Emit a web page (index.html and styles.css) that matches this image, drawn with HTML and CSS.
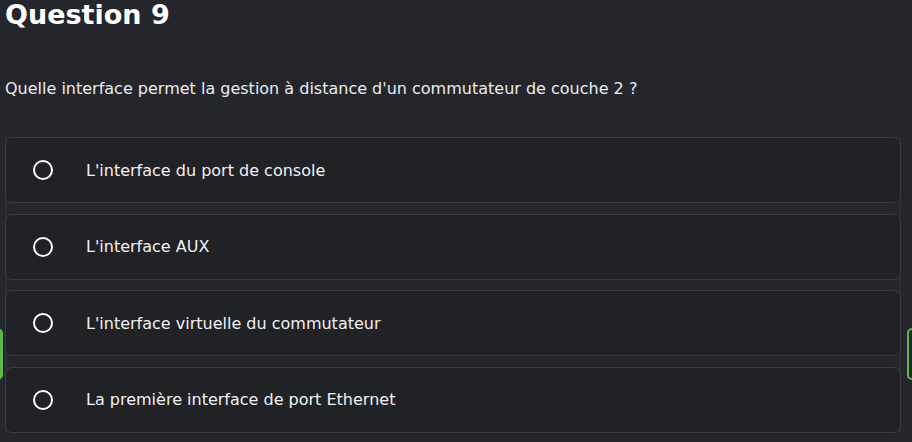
FILE: index.html
```html
<!DOCTYPE html>
<html lang="fr">
<head>
<meta charset="utf-8">
<title>Question 9</title>
<link rel="stylesheet" href="styles.css">
</head>
<body>
<main class="page">
  <h1 class="title">Question 9</h1>
  <p class="question">Quelle interface permet la gestion à distance d'un commutateur de couche 2 ?</p>
  <div class="options">
    <label class="option"><span class="radio"></span><span class="label">L'interface du port de console</span></label>
    <label class="option"><span class="radio"></span><span class="label">L'interface AUX</span></label>
    <label class="option"><span class="radio"></span><span class="label">L'interface virtuelle du commutateur</span></label>
    <label class="option"><span class="radio"></span><span class="label">La première interface de port Ethernet</span></label>
  </div>
</main>
<button class="nav nav-prev" aria-label="Précédent"></button>
<button class="nav nav-next" aria-label="Suivant"></button>
</body>
</html>
```

FILE: styles.css
```css
html, body {
  margin: 0;
  padding: 0;
  background: #25262b;
  color: #f1f1f3;
  font-family: "DejaVu Sans", "Liberation Sans", sans-serif;
  overflow: hidden;
}

.page {
  padding: 1px 11px 0 5px;
}

.title {
  margin: 0;
  font-size: 27px;
  line-height: 27px;
  font-weight: bold;
  color: #ffffff;
}

.question {
  margin: 50px 0 0 0;
  font-size: 16px;
  line-height: 22px;
  color: #ececef;
}

.options {
  margin-top: 37px;
  display: flex;
  flex-direction: column;
  gap: 10.67px;
  box-shadow: inset 2px 0 0 #2d2e33, inset -2px 0 0 #2d2e33;
}

.option {
  display: flex;
  align-items: center;
  height: 64px;
  border: 1px solid #3a3b40;
  border-radius: 7px;
  background: #212226;
  box-sizing: content-box;
}

.radio {
  width: 16px;
  height: 16px;
  border: 2px solid #ffffff;
  border-radius: 50%;
  margin-left: 27px;
  flex: none;
}

.label {
  margin-left: 33px;
  font-size: 16px;
  color: #f1f1f3;
}

.nav {
  position: fixed;
  top: 328px;
  height: 52px;
  width: 60px;
  border-radius: 5px;
  padding: 0;
}

.nav-prev {
  left: -57px;
  background: #5cb84a;
  border: 1px solid #5cb84a;
}

.nav-next {
  left: 907px;
  background: transparent;
  border: 2px solid #5cb84a;
}
```
